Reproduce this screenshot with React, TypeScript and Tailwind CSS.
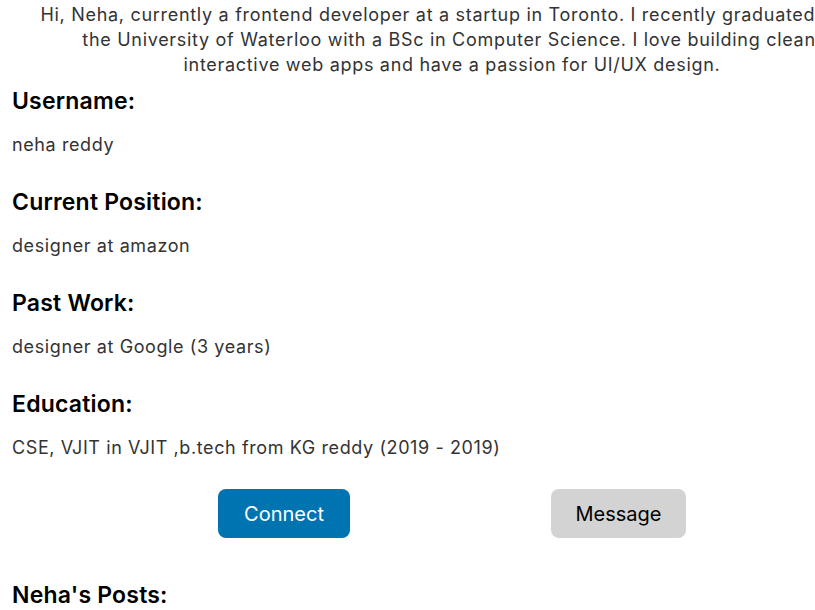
export default function App() {
  const details = [
    { label: "Username:", value: "neha reddy" },
    { label: "Current Position:", value: "designer at amazon" },
    { label: "Past Work:", value: "designer at Google (3 years)" },
    { label: "Education:", value: "CSE, VJIT in VJIT ,b.tech from KG reddy (2019 - 2019)" },
  ];

  return (
    <div className="w-[815px] h-[610px] overflow-hidden bg-white font-['Inter',sans-serif]">
      <div className="w-[904px] px-3">
        <p className="pt-[2px] text-center text-[18px] leading-[25px] tracking-[0.7px] text-[#333] whitespace-nowrap">
          Hi, Neha, currently a frontend developer at a startup in Toronto. I recently graduated from
          <br />
          the University of Waterloo with a BSc in Computer Science. I love building clean,
          <br />
          interactive web apps and have a passion for UI/UX design.
        </p>

        {details.map((item, i) => (
          <div key={item.label} className={i === 0 ? "mt-[8px]" : "mt-[29px]"}>
            <h3 className="text-[23px] leading-[32px] font-semibold tracking-[0.2px] text-black">{item.label}</h3>
            <p className="mt-[15px] text-[18px] leading-[25px] tracking-[0.6px] text-[#333]">{item.value}</p>
          </div>
        ))}

        <div className="mt-[29px] flex justify-center gap-[201px]">
          <button className="w-[132px] h-[49px] rounded-lg bg-[#0073b1] text-white text-[20px]">
            Connect
          </button>
          <button className="w-[135px] h-[49px] rounded-lg bg-[#d3d3d3] text-black text-[20px]">
            Message
          </button>
        </div>

        <h3 className="mt-[41px] text-[23px] leading-[32px] font-semibold tracking-[0.2px] text-black">Neha's Posts:</h3>
      </div>
    </div>
  );
}
